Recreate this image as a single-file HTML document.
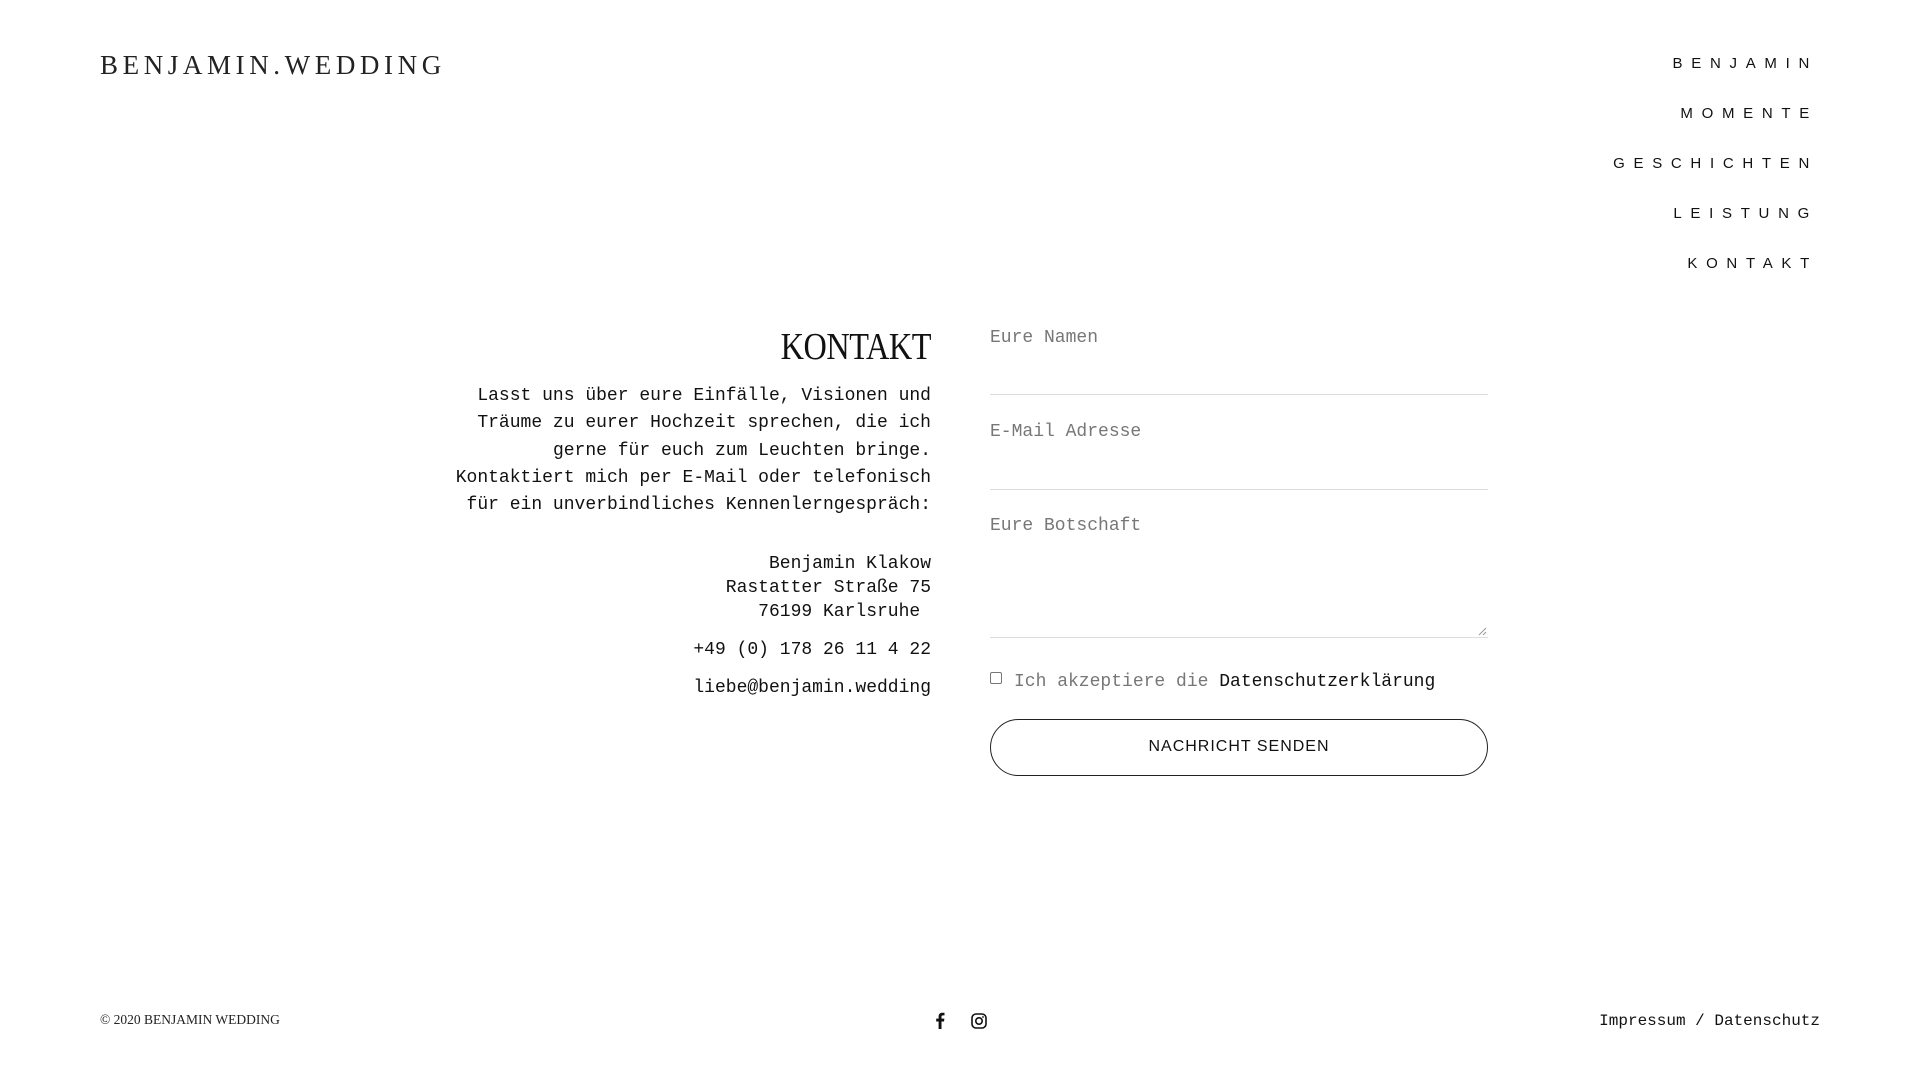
<!DOCTYPE html>
<html><head><meta charset="utf-8"><style>
*{margin:0;padding:0;box-sizing:border-box}
html,body{width:1920px;height:1080px;background:#fff;overflow:hidden;color:#111}
body{position:relative;font-family:"Liberation Mono",monospace}
.abs{position:absolute}
.logo{left:100px;top:50px;font-family:"Liberation Serif",serif;font-size:27px;letter-spacing:4.6px;color:#222;white-space:nowrap}
.nav{right:102px;text-align:right;font-family:"Liberation Sans",sans-serif;font-size:15px;letter-spacing:8.7px;color:#111;white-space:nowrap}
h1{position:absolute;right:989px;top:325px;font-family:"Liberation Serif",serif;font-weight:normal;font-size:38px;letter-spacing:-0.5px;color:#111;transform:scaleX(0.85);transform-origin:right}
.p{right:989px;text-align:right;font-size:18px;white-space:nowrap;color:#111}
.lbl{left:990px;font-size:18px;color:#777}
.line{left:990px;width:498px;height:1px;background:#ddd}
.btn{left:990px;top:719px;width:498px;height:57px;border:1.5px solid #222;border-radius:29px;text-align:center;line-height:54px;font-size:16px;font-family:"Liberation Sans",sans-serif;letter-spacing:1px}
</style></head><body>
<div class="abs logo">BENJAMIN.WEDDING</div>
<div class="abs nav" style="top:55px">BENJAMIN</div>
<div class="abs nav" style="top:105px">MOMENTE</div>
<div class="abs nav" style="top:155px">GESCHICHTEN</div>
<div class="abs nav" style="top:205px">LEISTUNG</div>
<div class="abs nav" style="top:255px">KONTAKT</div>

<h1>KONTAKT</h1>
<div class="abs p" style="top:383px;line-height:27.3px">Lasst uns über eure Einfälle, Visionen und<br>Träume zu eurer Hochzeit sprechen, die ich<br>gerne für euch zum Leuchten bringe.<br>Kontaktiert mich per E-Mail oder telefonisch<br>für ein unverbindliches Kennenlerngespräch:</div>
<div class="abs p" style="top:552px;line-height:24px">Benjamin Klakow<br>Rastatter Straße 75<br>76199 Karlsruhe&nbsp;</div>
<div class="abs p" style="top:640px">+49 (0) 178 26 11 4 22</div>
<div class="abs p" style="top:678px">liebe@benjamin.wedding</div>

<div class="abs lbl" style="top:328px">Eure Namen</div>
<div class="abs line" style="top:394px"></div>
<div class="abs lbl" style="top:422px">E-Mail Adresse</div>
<div class="abs line" style="top:489px"></div>
<div class="abs lbl" style="top:516px">Eure Botschaft</div>
<div class="abs line" style="top:637px"></div>
<svg class="abs" style="left:1478px;top:627px" width="9" height="9"><path d="M1 8L8 1M5 8L8 5" stroke="#999" stroke-width="1"/></svg>
<div class="abs" style="left:990px;top:672px;width:12px;height:12px;border:1px solid #777;border-radius:2px"></div>
<div class="abs" style="left:1014px;top:672px;font-size:18px;color:#777;white-space:nowrap">Ich akzeptiere die <span style="color:#111">Datenschutzerklärung</span></div>
<div class="abs btn">NACHRICHT SENDEN</div>

<div class="abs" style="left:100px;top:1012px;font-family:'Liberation Serif',serif;font-size:13.5px;color:#222">© 2020 BENJAMIN WEDDING</div>
<svg class="abs" style="left:935px;top:1012px" width="10" height="17" viewBox="0 0 10 17"><path d="M6.5 17V9.5H9L9.4 6.6H6.5V4.8C6.5 4 6.8 3.4 8 3.4H9.5V0.8C9.2 0.8 8.3 0.7 7.3 0.7 5.1 0.7 3.6 2 3.6 4.5V6.6H1.2V9.5H3.6V17Z" fill="#111"/></svg>
<svg class="abs" style="left:971px;top:1013px" width="16" height="16" viewBox="0 0 16 16"><rect x="1" y="1" width="14" height="14" rx="4" fill="none" stroke="#111" stroke-width="1.6"/><circle cx="8" cy="8" r="3.2" fill="none" stroke="#111" stroke-width="1.6"/><circle cx="12" cy="4" r="0.9" fill="#111"/></svg>
<div class="abs" style="right:100px;top:1012px;font-size:16px;color:#111;white-space:nowrap">Impressum / Datenschutz</div>
</body></html>
